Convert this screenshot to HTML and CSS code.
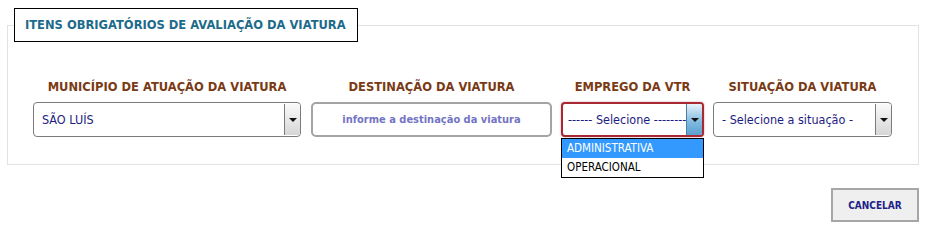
FILE: index.html
```html
<!DOCTYPE html>
<html lang="pt-BR">
<head>
    <meta charset="UTF-8">
    <title>Avaliação da Viatura</title>
    <link rel="stylesheet" href="styles.css">
</head>
<body>
    <div class="page">
        <fieldset class="box">
            <legend class="box-title">ITENS OBRIGATÓRIOS DE AVALIAÇÃO DA VIATURA</legend>

            <div class="fields">
                <div class="field">
                    <label class="field-label">MUNICÍPIO DE ATUAÇÃO DA VIATURA</label>
                    <div class="select">
                        <span class="select-text">SÃO LUÍS</span>
                        <span class="select-btn"><i class="caret"></i></span>
                    </div>
                </div>

                <div class="field">
                    <label class="field-label">DESTINAÇÃO DA VIATURA</label>
                    <input type="text" class="text-input" placeholder="informe a destinação da viatura">
                </div>

                <div class="field open">
                    <label class="field-label">EMPREGO DA VTR</label>
                    <div class="select focus">
                        <span class="select-text">------ Selecione --------</span>
                        <span class="select-btn"><i class="caret"></i></span>
                    </div>
                    <ul class="options">
                        <li class="selected">ADMINISTRATIVA</li>
                        <li>OPERACIONAL</li>
                    </ul>
                </div>

                <div class="field">
                    <label class="field-label">SITUAÇÃO DA VIATURA</label>
                    <div class="select">
                        <span class="select-text">- Selecione a situação -</span>
                        <span class="select-btn"><i class="caret"></i></span>
                    </div>
                </div>
            </div>
        </fieldset>

        <div class="actions">
            <button type="button" class="btn">CANCELAR</button>
        </div>
    </div>
</body>
</html>
```

FILE: styles.css
```css
body {
    margin: 0;
    background: #fff;
    font-family: "DejaVu Sans Condensed", "DejaVu Sans", sans-serif;
}

.page {
    padding: 8px 10px 0 7px;
}

.box {
    margin: 0;
    padding: 0 0 27px 0;
    border: 1px solid #e2e2e2;
}

.box-title {
    margin-left: 6px;
    padding: 0 11px 0 10px;
    height: 32px;
    line-height: 32px;
    border: 1px solid #000;
    background: #fff;
    color: #1d6b8a;
    font-family: "DejaVu Sans", sans-serif;
    font-size: 11.5px;
    font-weight: bold;
}

.fields {
    display: grid;
    grid-template-columns: 269px 241px 143px 179px;
    column-gap: 9px;
    padding: 37px 0 0 25px;
}

.field {
    position: relative;
}

.field-label {
    display: block;
    width: 268px;
    height: 16px;
    line-height: 16px;
    margin-bottom: 7px;
    text-align: center;
    white-space: nowrap;
    color: #7a3a14;
    font-family: "DejaVu Sans", sans-serif;
    font-size: 11.5px;
    font-weight: bold;
}

.field:nth-child(n+2) .field-label {
    width: auto;
}

.select {
    display: flex;
    align-items: stretch;
    box-sizing: border-box;
    height: 35px;
    border: 1px solid #7b7b7b;
    border-radius: 4px;
    background: #fff;
    overflow: hidden;
}

.field:first-child .select {
    width: 268px;
}

.select-text {
    flex: 1;
    overflow: hidden;
    white-space: nowrap;
    padding-left: 8px;
    line-height: 33px;
    color: #1c1c80;
    font-size: 12.5px;
}

.select-btn {
    display: flex;
    align-items: center;
    justify-content: center;
    width: 15px;
    margin: 1px 0;
    border-left: 1px solid #7b7b7b;
    background: linear-gradient(#fafafa, #d6d6d6);
}

.caret {
    width: 0;
    height: 0;
    border-left: 4px solid transparent;
    border-right: 4px solid transparent;
    border-top: 4px solid #111;
}

.select.focus {
    border: 2px solid #a82834;
    box-shadow: 0 0 2px rgba(168, 40, 52, .5);
}

.select.focus .select-text {
    padding-left: 5px;
    line-height: 31px;
}

.select.focus .select-btn {
    margin: 0;
    border-left-color: #4f7fa3;
    background: linear-gradient(#e6f3fb, #7db8e0 60%, #5b9fd0);
}

.text-input {
    box-sizing: border-box;
    width: 241px;
    height: 35px;
    border: 2px solid #a4a4a4;
    border-radius: 5px;
    font-family: inherit;
    font-size: 11px;
    font-weight: bold;
    text-align: center;
}

.text-input::placeholder {
    color: #7474c4;
}

.options {
    position: absolute;
    left: 0;
    top: 59px;
    box-sizing: border-box;
    width: 143px;
    margin: 0;
    padding: 0;
    list-style: none;
    border: 1px solid #000;
    background: #fff;
}

.options li {
    height: 19px;
    line-height: 19px;
    padding-left: 5px;
    color: #000;
    font-size: 11.5px;
}

.options li.selected {
    background: #3399ff;
    color: #fff;
}

.actions {
    display: flex;
    justify-content: flex-end;
    margin-top: 23px;
}

.btn {
    box-sizing: border-box;
    width: 88px;
    height: 34px;
    margin-right: 0;
    border: 2px solid #a6a6a6;
    background: #efefef;
    color: #1e1e88;
    font-family: inherit;
    font-size: 10px;
    font-weight: bold;
}
```
